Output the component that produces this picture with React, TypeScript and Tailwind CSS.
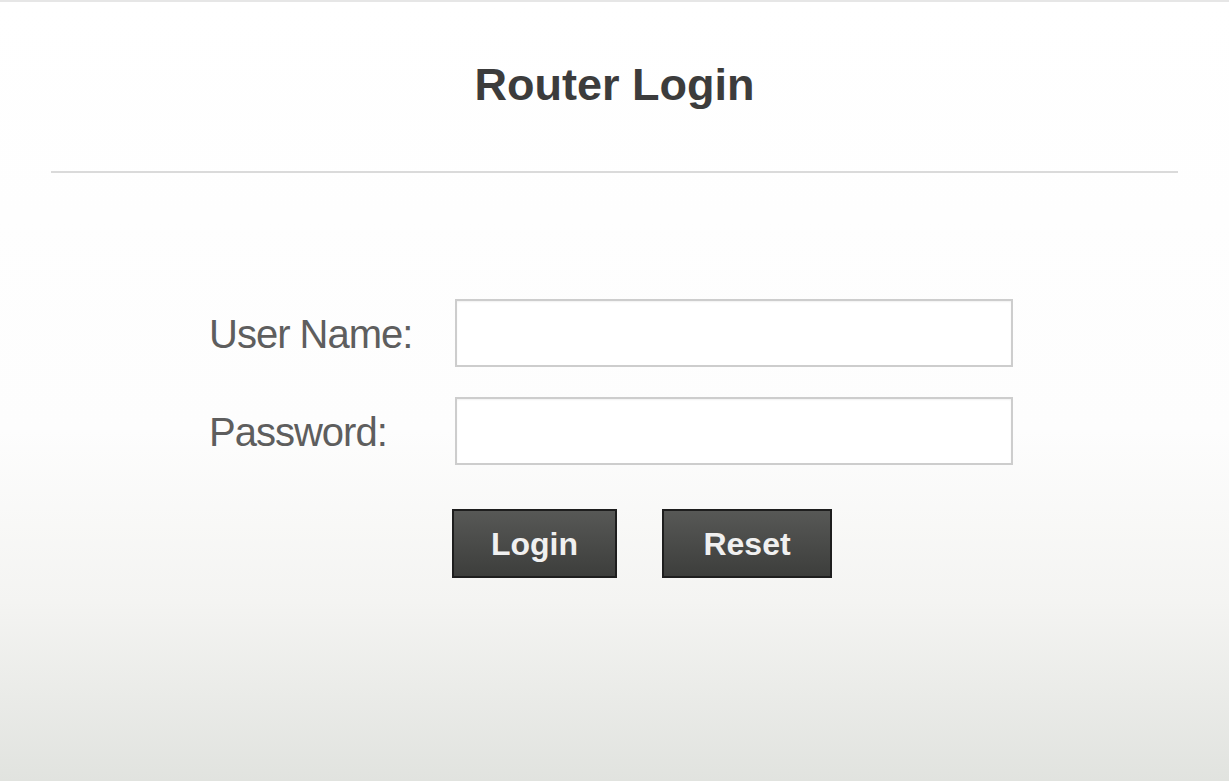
export default function App() {
  return (
    <div
      className="h-[781px] w-full overflow-hidden border-t-2 border-[#e6e6e6] bg-[linear-gradient(to_bottom,#ffffff_0%,#fdfdfd_55%,#f4f4f2_77%,#e1e3df_100%)]"
      style={{ fontFamily: '"Liberation Sans", Arial, sans-serif' }}
    >
      <div className="flex h-[169px] items-center justify-center pb-[3px]">
        <h1 className="text-[45px] font-bold text-[#3c3c3c]">Router Login</h1>
      </div>
      <div className="mx-[51px] h-[2px] bg-[#dadada]" />

      <form className="pl-[209px] pt-[126px]" onSubmit={(e) => e.preventDefault()}>
        <div className="grid grid-cols-[246px_558px] gap-y-[30px]">
          <label
            htmlFor="user"
            className="flex items-center pt-[2px] text-[40px] tracking-[-1px] text-[#5e5e5e]"
          >
            User Name:
          </label>
          <input
            id="user"
            className="h-[68px] border-2 border-[#cdcdcd] bg-white shadow-[inset_0_1px_2px_rgba(0,0,0,0.06)] outline-none"
          />
          <label
            htmlFor="pass"
            className="flex items-center pt-[2px] text-[40px] tracking-[-1px] text-[#5e5e5e]"
          >
            Password:
          </label>
          <input
            id="pass"
            type="password"
            className="h-[68px] border-2 border-[#cdcdcd] bg-white shadow-[inset_0_1px_2px_rgba(0,0,0,0.06)] outline-none"
          />
        </div>

        <div className="mt-[44px] flex gap-[45px] pl-[243px]">
          <button
            type="submit"
            className="h-[69px] w-[165px] border-2 border-[#1e1e1e] bg-gradient-to-b from-[#575856] to-[#3d3e3c] text-[32px] font-bold text-[#f0f0f0]"
          >
            Login
          </button>
          <button
            type="reset"
            className="h-[69px] w-[170px] border-2 border-[#1e1e1e] bg-gradient-to-b from-[#575856] to-[#3d3e3c] text-[32px] font-bold text-[#f0f0f0]"
          >
            Reset
          </button>
        </div>
      </form>
    </div>
  );
}
